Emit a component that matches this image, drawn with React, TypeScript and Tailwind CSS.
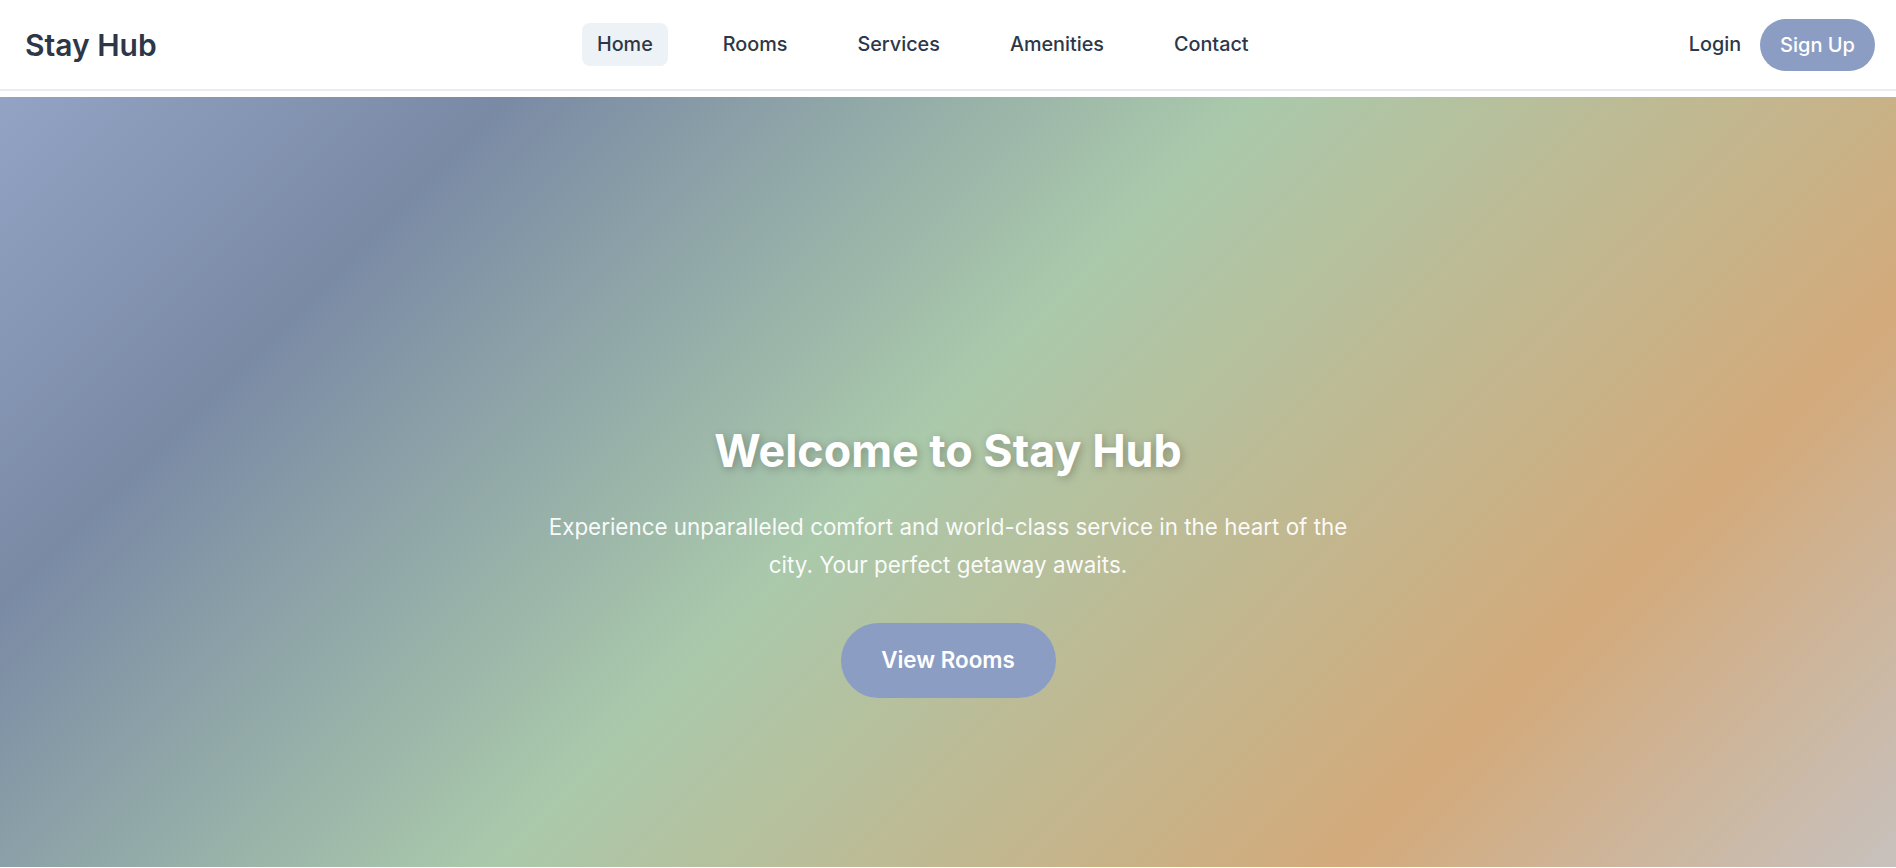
const navItems = ["Home", "Rooms", "Services", "Amenities", "Contact"];

function Header() {
  return (
    <header className="h-[91px] bg-white border-b-2 border-[#e9ecf1] flex items-center justify-between pl-[25px] pr-[21px]">
      <div className="text-[30px] font-semibold text-[#2d3748] leading-none">Stay Hub</div>
      <nav className="flex items-center gap-10">
        {navItems.map((item, i) => (
          <a
            key={item}
            className={
              "px-[15px] py-2 rounded-lg text-[19.8px] font-medium text-[#2d3748] leading-[27px] " +
              (i === 0 ? "bg-[#edf2f7]" : "")
            }
          >
            {item}
          </a>
        ))}
      </nav>
      <div className="flex items-center gap-[19px]">
        <a className="text-[19.8px] font-medium text-[#2d3748]">Login</a>
        <button className="h-[52px] px-5 rounded-full bg-[#8b9dc3] text-[20px] font-medium text-white">
          Sign Up
        </button>
      </div>
    </header>
  );
}

function Hero() {
  return (
    <section className="mt-[6px] h-[770px] flex flex-col items-center pt-[328px] bg-[linear-gradient(135deg,#92a3c4_0%,#7a8aa5_19%,#aac9ab_47%,#d3aa7b_79%,#c7c1bd_100%)]">
      <h1 className="text-[44.8px] leading-[1.2] font-bold text-white [text-shadow:2px_2px_8px_rgba(0,0,0,0.25)]">
        Welcome to Stay Hub
      </h1>
      <p className="mt-[29px] max-w-[800px] text-center text-[22.4px] leading-[38px] text-white/95">
        Experience unparalleled comfort and world-class service in the heart of the city. Your perfect getaway awaits.
      </p>
      <button className="mt-[39px] h-[75px] w-[215px] rounded-full bg-[#8b9dc3] text-[22.4px] font-semibold text-white">
        View Rooms
      </button>
    </section>
  );
}

export default function App() {
  return (
    <div className="min-h-screen bg-white font-['Inter',sans-serif]">
      <Header />
      <Hero />
    </div>
  );
}
